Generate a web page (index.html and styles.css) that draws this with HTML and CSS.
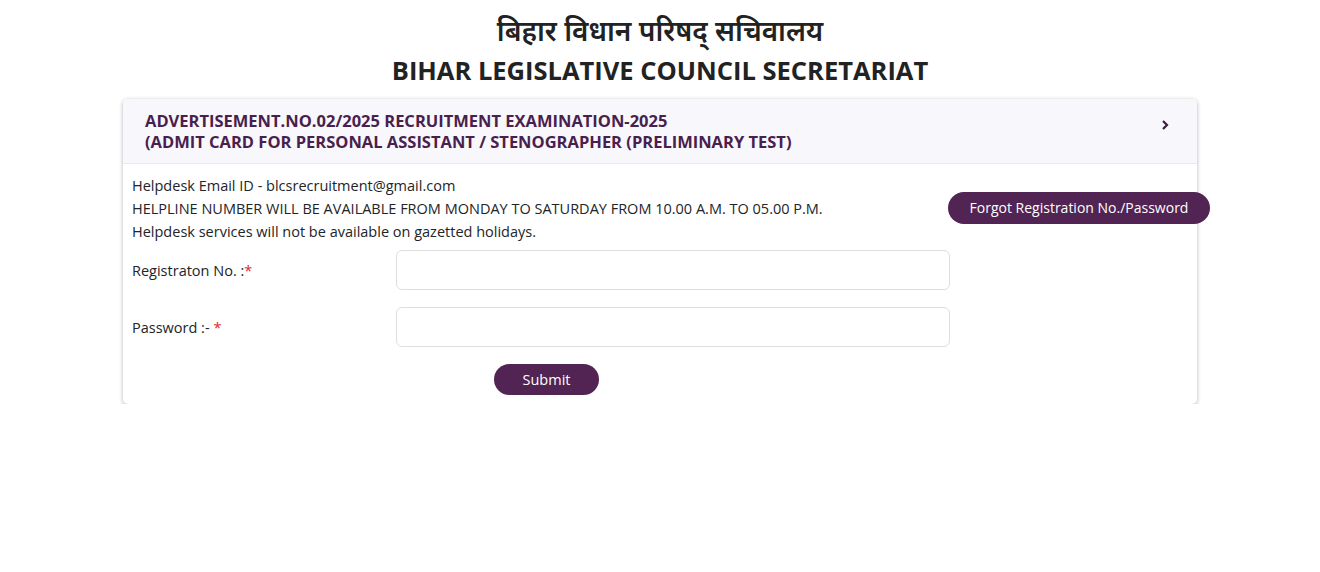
FILE: index.html
```html
<!DOCTYPE html>
<html lang="en">
<head>
<meta charset="utf-8">
<title>BLCS Admit Card</title>
<link rel="stylesheet" href="styles.css">
</head>
<body>
<header class="site-head">
  <h1 class="hi-title">बिहार विधान परिषद् सचिवालय</h1>
  <h2 class="en-title">BIHAR LEGISLATIVE COUNCIL SECRETARIAT</h2>
</header>
<main class="card">
  <div class="card-head">
    <div class="card-title">
      <div>ADVERTISEMENT.NO.02/2025 RECRUITMENT EXAMINATION-2025</div>
      <div>(ADMIT CARD FOR PERSONAL ASSISTANT / STENOGRAPHER (PRELIMINARY TEST)</div>
    </div>
    <svg class="chev" width="10" height="12" viewBox="0 0 10 12"><path d="M3 2 L7 6 L3 10" fill="none" stroke="#3a1e3c" stroke-width="2.2"/></svg>
  </div>
  <div class="card-body">
    <div class="info">
      <div class="info-text">
        <p>Helpdesk Email ID - blcsrecruitment@gmail.com</p>
        <p>HELPLINE NUMBER WILL BE AVAILABLE FROM MONDAY TO SATURDAY FROM 10.00 A.M. TO 05.00 P.M.</p>
        <p>Helpdesk services will not be available on gazetted holidays.</p>
      </div>
      <button class="btn btn-forgot" type="button">Forgot Registration No./Password</button>
    </div>
    <form class="form">
      <div class="row">
        <label class="lbl">Registraton No. :<span class="req">*</span></label>
        <input class="inp" type="text">
      </div>
      <div class="row">
        <label class="lbl">Password :- <span class="req">*</span></label>
        <input class="inp" type="password">
      </div>
      <div class="actions">
        <button class="btn btn-submit" type="button">Submit</button>
      </div>
    </form>
  </div>
</main>
</body>
</html>
```
FILE: styles.css
```css
* { box-sizing: border-box; }
body {
  margin: 0;
  background: #fff;
  font-family: "Open Sans", "Noto Sans", "Noto Sans Devanagari", sans-serif;
  color: #212529;
}
.site-head {
  text-align: center;
  padding-top: 8px;
}
.hi-title {
  margin: 0;
  font-size: 28px;
  line-height: 44px;
  font-weight: 600;
  color: #222;
}
.en-title {
  margin: 0;
  font-size: 25.5px;
  line-height: 36px;
  font-weight: 700;
  color: #222;
}
.card {
  width: 1074px;
  margin: 11px auto 0;
  border-radius: 5px;
  box-shadow: 0 1px 4px rgba(0,0,0,0.3);
  background: #fff;
}
.card-head {
  height: 65px;
  background: #f7f7fc;
  border-bottom: 1px solid #e8e8ef;
  border-radius: 5px 5px 0 0;
  display: flex;
  align-items: center;
  justify-content: space-between;
  padding: 0 27px 0 22px;
}
.card-title {
  color: #4a1e4d;
  font-weight: 700;
  font-size: 16.5px;
  line-height: 21px;
  margin-top: 0;
}
.chev { margin-top: -12px; }
.card-body {
  padding: 10px 9px 9px;
}
.info {
  display: flex;
  align-items: center;
  justify-content: space-between;
  margin-right: -22px;
}
.info-text p {
  margin: 0;
  font-size: 14.5px;
  line-height: 23px;
}
.btn {
  background: #522454;
  color: #fff;
  border: none;
  border-radius: 16px;
  font-family: inherit;
  font-size: 14px;
  cursor: pointer;
}
.btn-forgot {
  width: 262px;
  height: 32px;
  margin-top: -2px;
}
.form { margin-top: 7px; }
.row {
  display: flex;
  align-items: center;
  margin-bottom: 17px;
}
.lbl {
  width: 264px;
  font-size: 14.5px;
}
.req { color: #e3262b; }
.inp {
  width: 554px;
  height: 40px;
  border: 1px solid #dedede;
  border-radius: 6px;
}
.actions {
  padding-left: 362px;
}
.btn-submit {
  width: 105px;
  height: 31px;
  font-size: 14.5px;
}
```
